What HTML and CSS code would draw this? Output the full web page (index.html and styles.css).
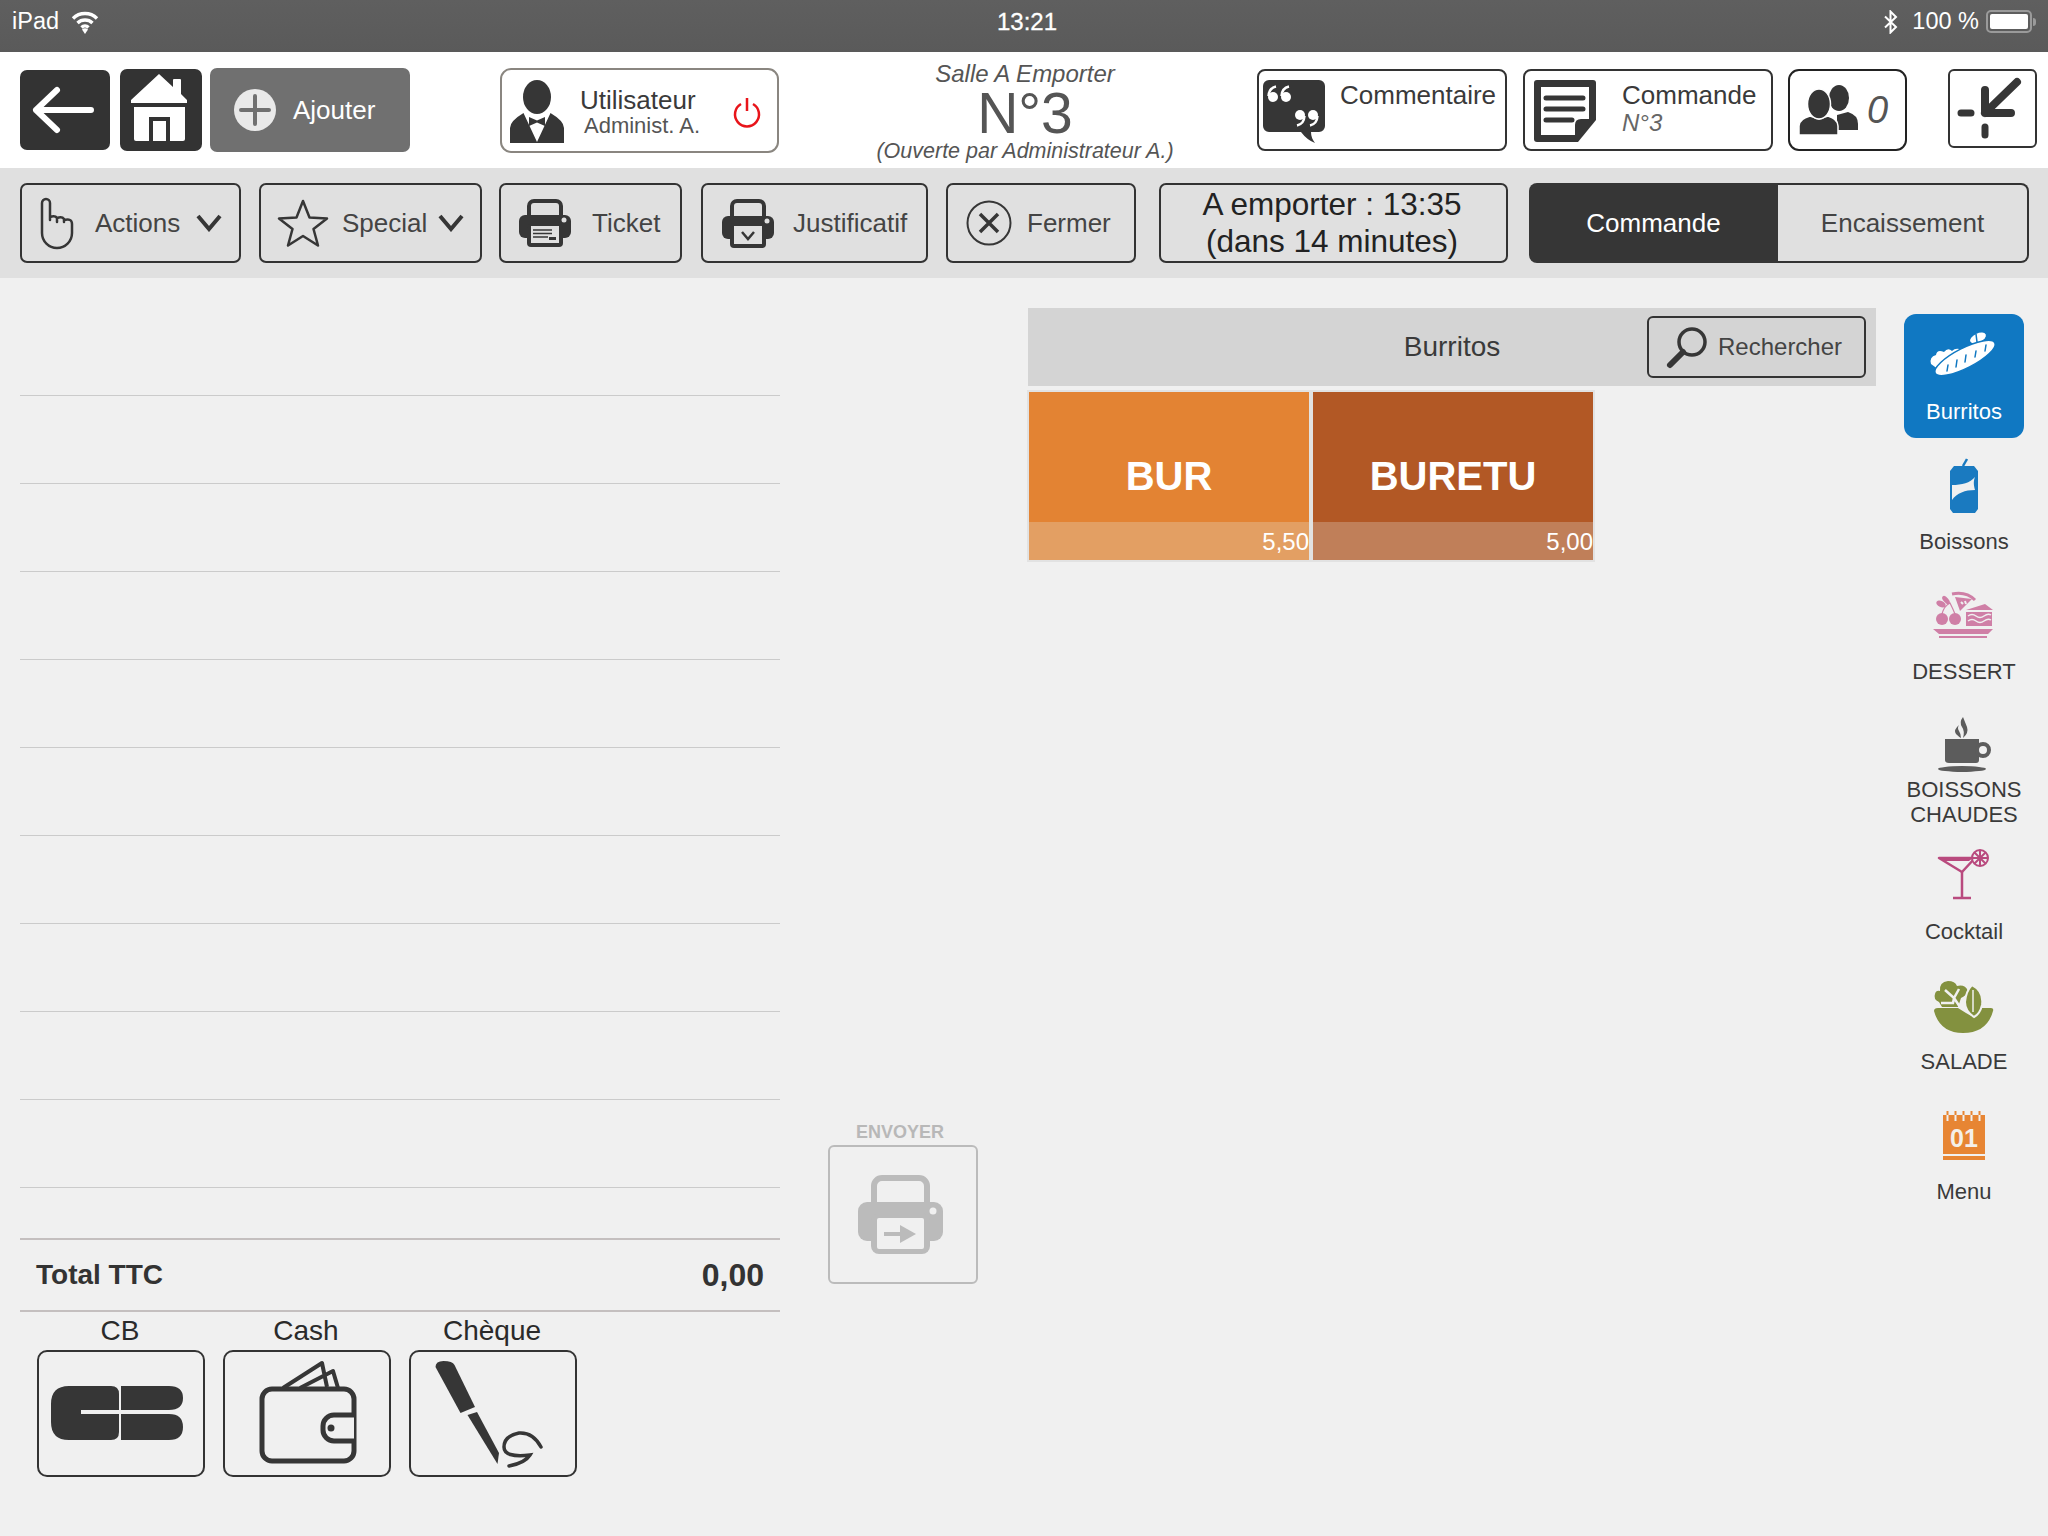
FILE: index.html
```html
<!DOCTYPE html>
<html lang="fr">
  <head>
    <meta charset="UTF-8" />
    <title>Caisse</title>
    <link rel="stylesheet" href="styles.css">
  </head>
  <body>
    <div class="status-bar">
      <div class="status-left">
        <span>iPad</span>
        <svg width="28" height="26" viewBox="0 0 28 26"><path d="M2 9.500a17 17 0 0 1 24 0M6.500 14a11 11 0 0 1 15 0M10.500 18.500a5 5 0 0 1 7 0" fill="none" stroke="#fff" stroke-width="3.400"/><path d="M11 20.500a4.500 4.500 0 0 1 6 0L14 25z" fill="#fff"/></svg>
      </div>
      <div class="status-time">13:21</div>
      <div class="status-right">
        <svg width="16" height="24" viewBox="0 0 16 24"><path d="M2 6.500l11 10.500-5.500 5.500V1.500L13 7 2 17.500" fill="none" stroke="#fff" stroke-width="2"/></svg>
        <span>100 %</span>
        <div class="battery"><div class="battery-level"></div></div>
        <div class="battery-tip"></div>
      </div>
    </div>

    <div class="header">
      <div class="btn-dark btn-back">
        <svg width="90" height="80" viewBox="0 0 90 80"><path d="M37 20L16 40l21 20M16 40h55" fill="none" stroke="#fff" stroke-width="6" stroke-linecap="round" stroke-linejoin="round"/></svg>
      </div>
      <div class="btn-dark btn-home">
        <svg width="82" height="82" viewBox="0 0 82 82"><path d="M39 5L53 18V11a1 1 0 0 1 1-1h6a1 1 0 0 1 1 1v14l6 6v3H11v-3z" fill="#fff"/><path d="M14 38h51v32a2 2 0 0 1-2 2H16a2 2 0 0 1-2-2z" fill="#fff"/><path d="M31 72V50h17v22" fill="none" stroke="#333" stroke-width="4"/></svg>
      </div>
      <div class="btn-add">
        <svg width="42" height="42" viewBox="0 0 42 42"><circle cx="21" cy="21" r="21" fill="#e9e9e9"/><path d="M21 7v28M7 21h28" stroke="#707070" stroke-width="4" stroke-linecap="round"/></svg>
        <span>Ajouter</span>
      </div>

      <div class="btn-user">
        <svg class="user-icon" width="56" height="64" viewBox="0 0 56 64"><ellipse cx="27" cy="17" rx="14" ry="17" fill="#363636"/><path d="M0 63V48q0-7 13.500-15L27 62l13.500-29Q54 41 54 48v15z" fill="#363636"/><path d="M19 37l8 3.500 8-3.500v9l-8-3.500-8 3.500z" fill="#363636"/></svg>
        <div class="user-text">
          <div class="user-role">Utilisateur</div>
          <div class="user-name">Administ. A.</div>
        </div>
        <svg class="power-icon" width="30" height="32" viewBox="0 0 30 32"><path d="M9 8a12 12 0 1 0 12 0M15 2v13" fill="none" stroke="#e8141a" stroke-width="2.500"/></svg>
      </div>

      <div class="order-title">
        <div class="order-room">Salle A Emporter</div>
        <div class="order-number">N°3</div>
        <div class="order-owner">(Ouverte par Administrateur A.)</div>
      </div>

      <div class="btn-outline btn-comment">
        <svg width="62" height="63" viewBox="0 0 62 63"><path d="M6 0h50a6 6 0 0 1 6 6v40a6 6 0 0 1-6 6h-8q0 6 4 11-8-3-14-11H6a6 6 0 0 1-6-6V6a6 6 0 0 1 6-6z" fill="#363636"/><g fill="#fff"><circle cx="10" cy="17" r="5"/><circle cx="23" cy="17" r="5"/><circle cx="37" cy="35" r="5"/><circle cx="50" cy="35" r="5"/></g><path d="M5.500 16Q6 8 13 6.500M18.500 16Q19 8 26 6.500M41.500 36Q41 44 34 45.500M54.500 36Q54 44 47 45.500" fill="none" stroke="#fff" stroke-width="2.500"/></svg>
        <span>Commentaire</span>
      </div>
      <div class="btn-outline btn-order">
        <svg width="62" height="62" viewBox="0 0 62 62"><path d="M3 0h56a3 3 0 0 1 3 3v37L44 62H3a3 3 0 0 1-3-3V3a3 3 0 0 1 3-3z" fill="#363636"/><path d="M7 7h48v32h-8q-6 0-6 6v10H7z" fill="#fff"/><path d="M12 18h37M12 29h37M12 40h26" stroke="#363636" stroke-width="5" stroke-linecap="round"/></svg>
        <div class="order-text">
          <div>Commande</div>
          <div class="order-ref">N°3</div>
        </div>
      </div>
      <div class="btn-outline btn-guests">
        <svg width="60" height="52" viewBox="0 0 60 52"><ellipse cx="40" cy="13" rx="10" ry="13" fill="#363636"/><path d="M38 45V30l11-3q10 3 10 12v6z" fill="#363636"/><path d="M0 50V41q0-7 11-10l9 3 9-3q10 3 10 10v9z" fill="#363636" stroke="#fff" stroke-width="1.500"/><ellipse cx="20" cy="19" rx="11.500" ry="15" fill="#363636" stroke="#fff" stroke-width="1.500"/></svg>
        <span class="guest-count">0</span>
      </div>
      <div class="btn-outline btn-exit">
        <svg width="85" height="75" viewBox="0 0 85 75"><path d="M11 42h10M35 56v8" stroke="#363636" stroke-width="7" stroke-linecap="round"/><path d="M67 11L35 42M35 19v23h26" fill="none" stroke="#363636" stroke-width="8" stroke-linecap="round" stroke-linejoin="round"/></svg>
      </div>
    </div>

    <div class="toolbar">
      <div class="tool tool-actions">
        <svg width="40" height="56" viewBox="0 0 40 56"><path d="M4 8a4 4 0 0 1 8 0v17M12 22q5-2 7 1v4M19 23q5-2 7 1v3M26 25q8-2 8 4v9a15 15 0 0 1-30 0V8" fill="none" stroke="#363636" stroke-width="2.500" stroke-linecap="round"/></svg>
        <span class="tool-label">Actions</span>
        <svg class="chevron" width="26" height="18" viewBox="0 0 26 18"><path d="M2 2l11 13L24 2" fill="none" stroke="#363636" stroke-width="4"/></svg>
      </div>
      <div class="tool tool-special">
        <svg width="52" height="50" viewBox="0 0 52 50"><path d="M26 3l6.500 16.500L50 20.500 36.500 31 41 47.500 26 38 11 47.500 15.500 31 2 20.500l17.500-1z" fill="none" stroke="#363636" stroke-width="2.500" stroke-linejoin="round"/></svg>
        <span class="tool-label">Special</span>
        <svg class="chevron" width="26" height="18" viewBox="0 0 26 18"><path d="M2 2l11 13L24 2" fill="none" stroke="#363636" stroke-width="4"/></svg>
      </div>
      <div class="tool tool-ticket">
        <svg width="52" height="48" viewBox="0 0 52 48"><rect x="10" y="2" width="32" height="24" rx="5" fill="none" stroke="#363636" stroke-width="4"/><rect x="0" y="16" width="52" height="23" rx="6" fill="#363636"/><rect x="8" y="25" width="36" height="23" rx="4" fill="#363636"/><rect x="12" y="27" width="28" height="17" fill="#e0e0e0"/><path d="M14 31h19M14 34.500h19M14 38h15" stroke="#363636" stroke-width="1.500"/><rect x="30" y="38" width="7" height="3" fill="#363636"/><circle cx="45" cy="21" r="2.500" fill="#e0e0e0"/></svg>
        <span class="tool-label">Ticket</span>
      </div>
      <div class="tool tool-proof">
        <svg width="52" height="49" viewBox="0 0 52 49"><rect x="10" y="2" width="32" height="24" rx="5" fill="none" stroke="#363636" stroke-width="4"/><rect x="0" y="17" width="52" height="23" rx="6" fill="#363636"/><rect x="8" y="24" width="36" height="25" rx="4" fill="#363636"/><rect x="12" y="27" width="28" height="18" fill="#e0e0e0"/><path d="M20 33l6 7 6-7" fill="none" stroke="#363636" stroke-width="2.500"/><circle cx="45" cy="22" r="2.500" fill="#e0e0e0"/></svg>
        <span class="tool-label">Justificatif</span>
      </div>
      <div class="tool tool-close">
        <svg width="46" height="46" viewBox="0 0 46 46"><circle cx="23" cy="23" r="21.500" fill="none" stroke="#363636" stroke-width="2"/><path d="M14 14l18 18M32 14L14 32" stroke="#363636" stroke-width="3.500"/></svg>
        <span class="tool-label">Fermer</span>
      </div>
      <div class="tool tool-time">A emporter : 13:35<br>(dans 14 minutes)</div>
      <div class="mode-switch">
        <div class="mode mode-active">Commande</div>
        <div class="mode">Encaissement</div>
      </div>
    </div>

    <div class="main">
      <div class="ticket">
        <div class="ticket-lines">
          <div class="ticket-line"></div>
          <div class="ticket-line"></div>
          <div class="ticket-line"></div>
          <div class="ticket-line"></div>
          <div class="ticket-line"></div>
          <div class="ticket-line"></div>
          <div class="ticket-line"></div>
          <div class="ticket-line"></div>
          <div class="ticket-line"></div>
          <div class="ticket-line"></div>
        </div>
        <div class="ticket-total">
          <span class="total-label">Total TTC</span>
          <span class="total-value">0,00</span>
        </div>
        <div class="payments">
          <div class="payment">
            <div class="payment-label">CB</div>
            <div class="payment-btn">
              <svg width="164" height="123" viewBox="0 0 164 123"><path d="M30 34h42q8 0 8 8v16H42v4h38v18q0 8-8 8H30q-18 0-18-18V52q0-18 18-18z" fill="#363636"/><path d="M82 34h48q14 0 14 12t-14 12H82zM82 62h48q14 0 14 13t-14 13H82z" fill="#363636"/></svg>
            </div>
          </div>
          <div class="payment">
            <div class="payment-label">Cash</div>
            <div class="payment-btn">
              <svg width="164" height="123" viewBox="0 0 164 123"><path d="M58 36L97 11l5 24M75 36l33-17 5 17" fill="none" stroke="#363636" stroke-width="4" stroke-linejoin="round"/><rect x="37" y="37" width="92" height="72" rx="10" fill="#f0f0f0" stroke="#363636" stroke-width="5"/><path d="M129 63h-20a11 11 0 0 0-11 11v4a11 11 0 0 0 11 11h20" fill="#f0f0f0" stroke="#363636" stroke-width="5"/><circle cx="106" cy="76" r="3.500" fill="#363636"/></svg>
            </div>
          </div>
          <div class="payment">
            <div class="payment-label">Chèque</div>
            <div class="payment-btn">
              <svg width="164" height="123" viewBox="0 0 164 123"><path d="M24.500 15q0-6 8-6 9 0 11 4l20.500 42-14.500 6z" fill="#363636"/><path d="M56.500 63l9.500-3 22 41-1.500 11z" fill="#363636"/><path d="M130 95q-8-15-22-14-15 3-15 14t26 8q-5 8-21 11" fill="none" stroke="#363636" stroke-width="3.500" stroke-linecap="round"/></svg>
            </div>
          </div>
        </div>
      </div>

      <div class="send">
        <div class="send-label">ENVOYER</div>
        <div class="send-btn">
          <svg width="85" height="80" viewBox="0 0 85 80"><rect x="16" y="3" width="53" height="38" rx="8" fill="none" stroke="#bbb" stroke-width="6"/><rect x="0" y="27" width="85" height="39" rx="9" fill="#bbb"/><rect x="13" y="38" width="59" height="41" rx="8" fill="#bbb"/><rect x="19" y="43" width="47" height="31" rx="2" fill="#f0f0f0"/><circle cx="75" cy="36" r="3.500" fill="#f0f0f0"/><path d="M26 59h20" stroke="#bbb" stroke-width="4"/><path d="M42 50l16 9-16 9z" fill="#bbb"/></svg>
        </div>
      </div>

      <div class="catalog">
        <div class="catalog-bar">
          <div class="catalog-title">Burritos</div>
          <div class="search">
            <svg width="46" height="46" viewBox="0 0 46 46"><circle cx="27" cy="18" r="13" fill="none" stroke="#363636" stroke-width="3.500"/><path d="M18 28L5 41" stroke="#363636" stroke-width="6" stroke-linecap="round"/></svg>
            <span>Rechercher</span>
          </div>
        </div>
        <div class="tiles">
          <div class="tile tile-bur">BUR<div class="tile-price">5,50</div></div>
          <div class="tile tile-buretu">BURETU<div class="tile-price">5,00</div></div>
        </div>
      </div>

      <div class="categories">
        <div class="category category-active">
          <svg class="bread" width="64" height="64" viewBox="0 0 64 64"><path d="M-1 41q-2-7 5-9 1-6 8-3 4-5 8-1 4-4 10-1l10-4 10 4-40 22z" fill="#fff"/><ellipse cx="46" cy="15" rx="8.500" ry="4.500" transform="rotate(-25 46 15)" fill="#fff"/><path d="M44 11l1 8" stroke="#1078c2" stroke-width="1.500"/><ellipse cx="33" cy="35" rx="33.500" ry="10" transform="rotate(-27 33 35)" fill="#fff" stroke="#1078c2" stroke-width="1.500"/><path d="M16 42l-1 6M25 37l-1 7M34 32l-1 7M44 28l-1 6M54 22l-1 6" stroke="#1078c2" stroke-width="1.500" stroke-linecap="round"/></svg>
          <div class="category-label">Burritos</div>
        </div>
        <div class="category">
          <svg width="64" height="64" viewBox="0 0 64 64"><path d="M31 13l4-7" stroke="#1a7ac0" stroke-width="2.500"/><path d="M22 13h20l4 5v38l-3 4H21l-3-4V18z" fill="#1a7ac0"/><path d="M20 32c10 0 18-2 23-8-2 5-1 9 0 13-10 0-18 3-23 10z" fill="#f0f0f0"/></svg>
          <div class="category-label">Boissons</div>
        </div>
        <div class="category">
          <svg width="64" height="64" viewBox="0 0 64 64"><g fill="#cf7fa6"><path d="M1 46h60l-5 5H7zM7 53h48v2H7z"/><circle cx="10" cy="36" r="6"/><circle cx="23" cy="36" r="6"/><ellipse cx="9" cy="21" rx="5" ry="3" transform="rotate(25 9 21)"/><ellipse cx="14" cy="17" rx="5" ry="2.500" transform="rotate(50 14 17)"/><path d="M23 14l17 2-12 12z"/><path d="M34 27l19-6 8 6zM34 29h26v14H34z"/></g><path d="M10 31q2-8 8-11 3 6 5 11" fill="none" stroke="#cf7fa6" stroke-width="1.200"/><path d="M20 11q14-3 23 6" fill="none" stroke="#cf7fa6" stroke-width="3"/><path d="M36 33q4-3 8 0t8 0 7-1M36 38q4-3 8 0t8 0 7-1" fill="none" stroke="#f0f0f0" stroke-width="1.500"/><path d="M29 19l2 2M33 18l1 3" stroke="#f0f0f0" stroke-width="2"/></svg>
          <div class="category-label">DESSERT</div>
        </div>
        <div class="category">
          <svg width="64" height="64" viewBox="0 0 64 64"><path d="M13 26h34v21q0 3-3 3H17q-4 0-4-3z" fill="#5c5c5c"/><circle cx="51" cy="37" r="6" fill="none" stroke="#5c5c5c" stroke-width="4"/><ellipse cx="30" cy="56" rx="24" ry="3" fill="#5c5c5c"/><path d="M27 12q-6 5-3 9 3 3 5 4 0-4-2-7t0-6zM31 4q-4 5-1 10 3 4 1 11 6-5 4-11-2-5-4-10z" fill="#5c5c5c"/></svg>
          <div class="category-label">BOISSONS CHAUDES</div>
        </div>
        <div class="category">
          <svg width="64" height="64" viewBox="0 0 64 64"><path d="M7 15h36L30 29z" fill="none" stroke="#b94a7e" stroke-width="2.500" stroke-linejoin="round"/><path d="M7 14h35l-5 4H13z" fill="#b94a7e"/><path d="M30 29v26M21 55h18" stroke="#b94a7e" stroke-width="2.500"/><circle cx="48" cy="15" r="8" fill="#f0f0f0" stroke="#b94a7e" stroke-width="2"/><path d="M48 7v16M40 15h16M42.500 9.500l11 11M53.500 9.500l-11 11" stroke="#b94a7e" stroke-width="2"/></svg>
          <div class="category-label">Cocktail</div>
        </div>
        <div class="category">
          <svg width="64" height="64" viewBox="0 0 64 64"><path d="M2 38q0-3 4-3h20l8 5 7 4 9-9h9q3 0 2 3-6 22-30 22Q8 60 2 38z" fill="#83913f"/><path d="M7 29q-6-3-4-8 1-4 5-3-1-9 8-10 7 0 9 5 8-2 11 5-2 5-7 7l-3 9H10z" fill="#83913f"/><path d="M13 17l9 8 5-9M22 25l-1 5-12 0M22 25l6 9" fill="none" stroke="#f0f0f0" stroke-width="2.500"/><path d="M40 12q12 6 10 20-2 9-8 12-9-6-9-15 1-11 7-17z" fill="#83913f" stroke="#f0f0f0" stroke-width="2"/><path d="M41 17v22" stroke="#f0f0f0" stroke-width="1.500"/></svg>
          <div class="category-label">SALADE</div>
        </div>
        <div class="category">
          <svg width="64" height="64" viewBox="0 0 64 64"><path d="M11 12h42v39H11zM11 53h42v4H11z" fill="#e78533"/><path d="M15.500 8v4M23.500 8v4M31.500 8v4M39.500 8v4M47.500 8v4" stroke="#e78533" stroke-width="2"/><path d="M15.500 12v6M23.500 12v6M31.500 12v6M39.500 12v6M47.500 12v6" stroke="#f0f0f0" stroke-width="2"/><text x="32" y="44" text-anchor="middle" class="menu-day">01</text></svg>
          <div class="category-label">Menu</div>
        </div>
      </div>
    </div>
  </body>
</html>
```

FILE: styles.css
```css
html,
body {
  margin: 0;
  padding: 0;
}
body {
  width: 2048px;
  height: 1536px;
  overflow: hidden;
  background-color: #f0f0f0;
  color: #3a3a3a;
  font-family: "Liberation Sans", Arial, sans-serif;
  font-size: 26px;
}
svg {
  display: block;
  flex-shrink: 0;
}

/* status bar */
.status-bar {
  height: 52px;
  display: grid;
  grid-template-columns: 1fr auto 1fr;
  align-items: center;
  padding: 0 12px 9px;
  box-sizing: border-box;
  background: linear-gradient(#5f5f5f, #5a5a5a);
  color: #fff;
  font-size: 23.5px;
}
.status-left {
  display: flex;
  align-items: center;
  gap: 12px;
}
.status-time {
  font-size: 24px;
  padding-left: 6px;
  -webkit-text-stroke: 0.3px #fff;
}
.status-right {
  display: flex;
  align-items: center;
  justify-content: flex-end;
}
.status-right span {
  margin: 0 7px 0 13px;
}
.battery {
  width: 46px;
  height: 23px;
  box-sizing: border-box;
  border: 2px solid #9a9a9a;
  border-radius: 5px;
  padding: 2px;
}
.battery-level {
  height: 100%;
  background-color: #fff;
  border-radius: 2px;
}
.battery-tip {
  width: 3px;
  height: 8px;
  margin-left: 1px;
  background-color: #9a9a9a;
  border-radius: 0 3px 3px 0;
}

/* header */
.header {
  height: 116px;
  box-sizing: border-box;
  padding: 9px 0 0 20px;
  display: flex;
  align-items: flex-start;
  background-color: #fff;
}
.btn-dark {
  background-color: #333;
  border-radius: 7px;
}
.btn-back {
  width: 90px;
  height: 80px;
  margin-top: 9px;
}
.btn-home {
  width: 82px;
  height: 82px;
  margin: 8px 0 0 10px;
}
.btn-add {
  width: 200px;
  height: 84px;
  margin: 7px 0 0 8px;
  padding-left: 24px;
  box-sizing: border-box;
  display: flex;
  align-items: center;
  gap: 17px;
  background-color: #707070;
  border-radius: 7px;
  color: #fff;
}
.btn-user {
  width: 279px;
  height: 85px;
  margin: 7px 0 0 90px;
  box-sizing: border-box;
  border: 2px solid #8a8680;
  border-radius: 11px;
  display: flex;
  align-items: flex-end;
}
.user-icon {
  margin-left: 8px;
  margin-bottom: 7px;
}
.user-text {
  align-self: center;
  margin-left: 14px;
  width: 152px;
  padding-top: 2px;
}
.user-role {
  line-height: 28px;
}
.user-name {
  margin-left: 4px;
  font-size: 22px;
  line-height: 24px;
  color: #555;
}
.power-icon {
  align-self: center;
  margin-top: 2px;
}
.order-title {
  width: 464px;
  margin-left: 14px;
  text-align: center;
  color: #555;
}
.order-room {
  font-size: 24px;
  line-height: 26px;
  font-style: italic;
}
.order-number {
  font-size: 57px;
  line-height: 51px;
  margin-top: 1px;
}
.order-owner {
  font-size: 21.5px;
  line-height: 24px;
  font-style: italic;
}
.btn-outline {
  box-sizing: border-box;
  height: 82px;
  margin-top: 8px;
  border: 2px solid #333;
  border-radius: 8px;
  display: flex;
}
.btn-comment {
  width: 250px;
  padding: 9px 0 0 4px;
  gap: 15px;
}
.btn-comment span {
  line-height: 30px;
}
.btn-order {
  width: 250px;
  margin-left: 16px;
  padding: 9px 0 0 9px;
  gap: 26px;
}
.order-text {
  padding-top: 1px;
  line-height: 28px;
}
.order-ref {
  font-size: 24px;
  font-style: italic;
  color: #666;
}
.btn-guests {
  width: 119px;
  margin-left: 15px;
  padding: 14px 0 0 9px;
  gap: 8px;
  border-color: #222;
  border-radius: 11px;
}
.guest-count {
  margin-top: 2px;
  font-size: 38px;
  font-style: italic;
  line-height: 46px;
  color: #555;
}
.btn-exit {
  width: 89px;
  height: 79px;
  margin-left: 41px;
  border-radius: 6px;
  align-items: center;
  justify-content: center;
}

/* toolbar */
.toolbar {
  height: 110px;
  box-sizing: border-box;
  padding: 15px 0 0 20px;
  display: flex;
  align-items: flex-start;
  gap: 18px;
  background-color: #e0e0e0;
}
.tool {
  height: 80px;
  box-sizing: border-box;
  border: 2px solid #333;
  border-radius: 7px;
  display: flex;
  align-items: center;
}
.tool-label {
  color: #444;
}
.tool-actions {
  width: 221px;
  padding-left: 16px;
}
.tool-actions .tool-label {
  margin-left: 17px;
}
.tool-actions .chevron {
  margin-left: 16px;
}
.tool-special {
  width: 223px;
  padding-left: 16px;
}
.tool-special .tool-label {
  margin-left: 13px;
}
.tool-special .chevron {
  margin-left: 11px;
}
.tool-ticket {
  width: 183px;
  margin-left: -1px;
  padding-left: 18px;
  gap: 21px;
}
.tool-proof {
  width: 227px;
  margin-left: 1px;
  padding-left: 19px;
  gap: 19px;
}
.tool-close {
  width: 190px;
  padding-left: 18px;
  gap: 15px;
}
.tool-time {
  width: 349px;
  margin-left: 5px;
  padding-right: 3px;
  justify-content: center;
  text-align: center;
  font-size: 31.5px;
  line-height: 37px;
  color: #222;
}
.mode-switch {
  display: flex;
  width: 500px;
  height: 80px;
  margin-left: 3px;
}
.mode {
  flex: 1;
  box-sizing: border-box;
  display: flex;
  align-items: center;
  justify-content: center;
  border: 2px solid #333;
  border-left: none;
  border-radius: 0 8px 8px 0;
  color: #444;
}
.mode-active {
  background-color: #363636;
  border: none;
  border-radius: 8px 0 0 8px;
  color: #fff;
}

/* main area */
.main {
  display: flex;
  align-items: flex-start;
}
.ticket {
  width: 760px;
  margin: 30px 0 0 20px;
}
.ticket-line {
  height: 88px;
  box-sizing: border-box;
  border-bottom: 1px solid #cbcbcb;
}
.ticket-total {
  height: 74px;
  margin-top: 50px;
  padding: 0 16px;
  box-sizing: border-box;
  display: flex;
  align-items: center;
  justify-content: space-between;
  border-top: 2px solid #c4bfbf;
  border-bottom: 2px solid #c4bfbf;
  font-weight: bold;
  color: #333;
}
.total-label {
  font-size: 28px;
}
.total-value {
  font-size: 32px;
}
.payments {
  display: flex;
  gap: 18px;
  padding-left: 17px;
}
.payment {
  width: 168px;
  text-align: center;
}
.payment-label {
  height: 38px;
  font-size: 28px;
  line-height: 38px;
  margin-right: 2px;
  color: #2a2a2a;
}
.payment-btn {
  height: 127px;
  box-sizing: border-box;
  border: 2px solid #333;
  border-radius: 10px;
}
.send {
  width: 150px;
  margin: 841px 0 0 48px;
}
.send-label {
  height: 26px;
  padding-right: 6px;
  font-size: 18px;
  font-weight: bold;
  line-height: 26px;
  text-align: center;
  color: #b8b8b8;
}
.send-btn {
  height: 139px;
  box-sizing: border-box;
  padding: 28px 0 0 28px;
  border: 2px solid #bbb;
  border-radius: 6px;
}
.catalog {
  width: 848px;
  margin: 30px 0 0 50px;
}
.catalog-bar {
  height: 78px;
  display: grid;
  grid-template-columns: 1fr auto 1fr;
  align-items: center;
  padding-right: 10px;
  padding-left: 10px;
  box-sizing: border-box;
  background-color: #d4d4d4;
}
.catalog-title {
  grid-column: 2;
  font-size: 28px;
}
.search {
  grid-column: 3;
  justify-self: end;
  width: 219px;
  height: 62px;
  box-sizing: border-box;
  padding-left: 16px;
  display: flex;
  align-items: center;
  gap: 7px;
  border: 2px solid #333;
  border-radius: 6px;
  font-size: 24px;
  color: #444;
}
.tiles {
  width: fit-content;
  display: flex;
  gap: 4px;
  margin: 4px 0 0 -1px;
  padding: 2px;
  background-color: #e2e2e2;
}
.tile {
  position: relative;
  width: 280px;
  height: 168px;
  display: flex;
  align-items: center;
  justify-content: center;
  color: #fff;
  font-size: 40px;
  font-weight: bold;
}
.tile-bur {
  background-color: #e38333;
}
.tile-buretu {
  background-color: #b25825;
}
.tile-price {
  position: absolute;
  left: 0;
  right: 0;
  bottom: 0;
  height: 38px;
  font-size: 24px;
  font-weight: normal;
  line-height: 40px;
  text-align: right;
}
.tile-bur .tile-price {
  background-color: #e39f63;
}
.tile-buretu .tile-price {
  background-color: #c07f59;
}
.categories {
  width: 120px;
  margin: 36px 0 0 28px;
  display: flex;
  flex-direction: column;
  gap: 6px;
}
.category {
  height: 124px;
  box-sizing: border-box;
  padding-top: 9px;
  display: flex;
  flex-direction: column;
  align-items: center;
}
.category-active {
  background-color: #1078c2;
  border-radius: 12px;
  color: #fff;
}
.bread {
  overflow: visible;
}
.category-label {
  height: 49px;
  display: flex;
  align-items: center;
  margin: 0 -5px;
  font-size: 22px;
  line-height: 25px;
  text-align: center;
}
.menu-day {
  font-size: 25px;
  font-weight: bold;
  fill: #f4efe9;
}
```
